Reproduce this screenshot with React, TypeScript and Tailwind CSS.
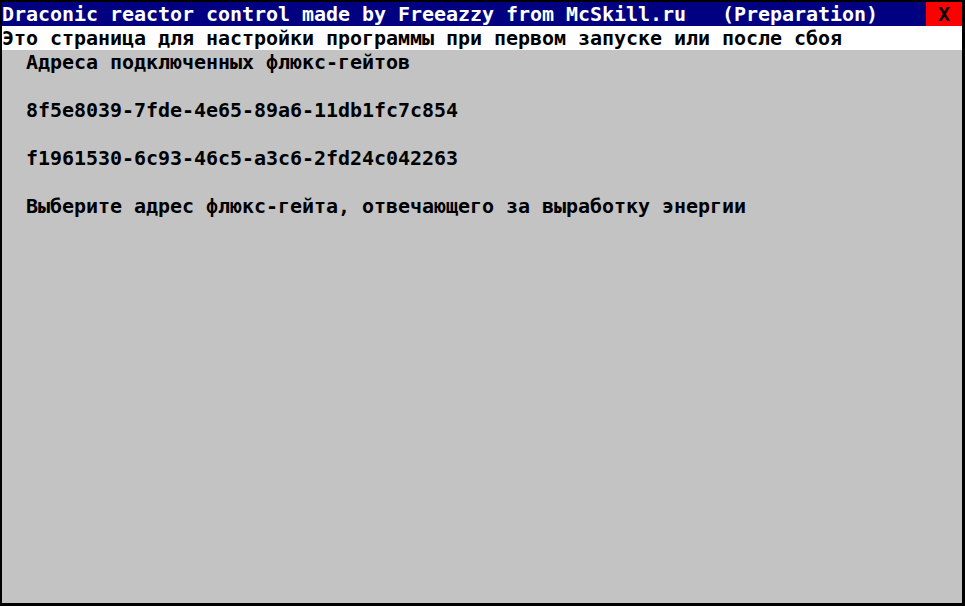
const title = "Draconic reactor control made by Freeazzy from McSkill.ru   (Preparation)";
const hint = "Это страница для настройки программы при первом запуске или после сбоя";

const lines = [
  "Адреса подключенных флюкс-гейтов",
  "",
  "8f5e8039-7fde-4e65-89a6-11db1fc7c854",
  "",
  "f1961530-6c93-46c5-a3c6-2fd24c042263",
  "",
  "Выберите адрес флюкс-гейта, отвечающего за выработку энергии",
];

// one 24px text row of the 80x25 screen
function Line({ children, className = "" }: { children: React.ReactNode; className?: string }) {
  return <div className={`h-6 leading-[24px] whitespace-pre ${className}`}>{children}</div>;
}

export default function App() {
  return (
    <div className="w-[965px] h-[606px] bg-black pt-[2px] pl-[2px]">
      <div className="w-[960px] h-[601px] bg-[#c3c3c3] text-black font-['DejaVu_Sans_Mono','Liberation_Mono',monospace] font-bold text-[20px] tracking-[-0.04px]">
        {/* title bar */}
        <div className="flex h-6 bg-[#000080]">
          <Line className="flex-1 text-white">{title}</Line>
          <Line className="w-9 bg-[#ff0000] text-center">X</Line>
        </div>
        <Line className="bg-white">{hint}</Line>

        <div className="pl-6">
          {lines.map((l, i) => (
            <Line key={i}>{l}</Line>
          ))}
        </div>
      </div>
    </div>
  );
}
